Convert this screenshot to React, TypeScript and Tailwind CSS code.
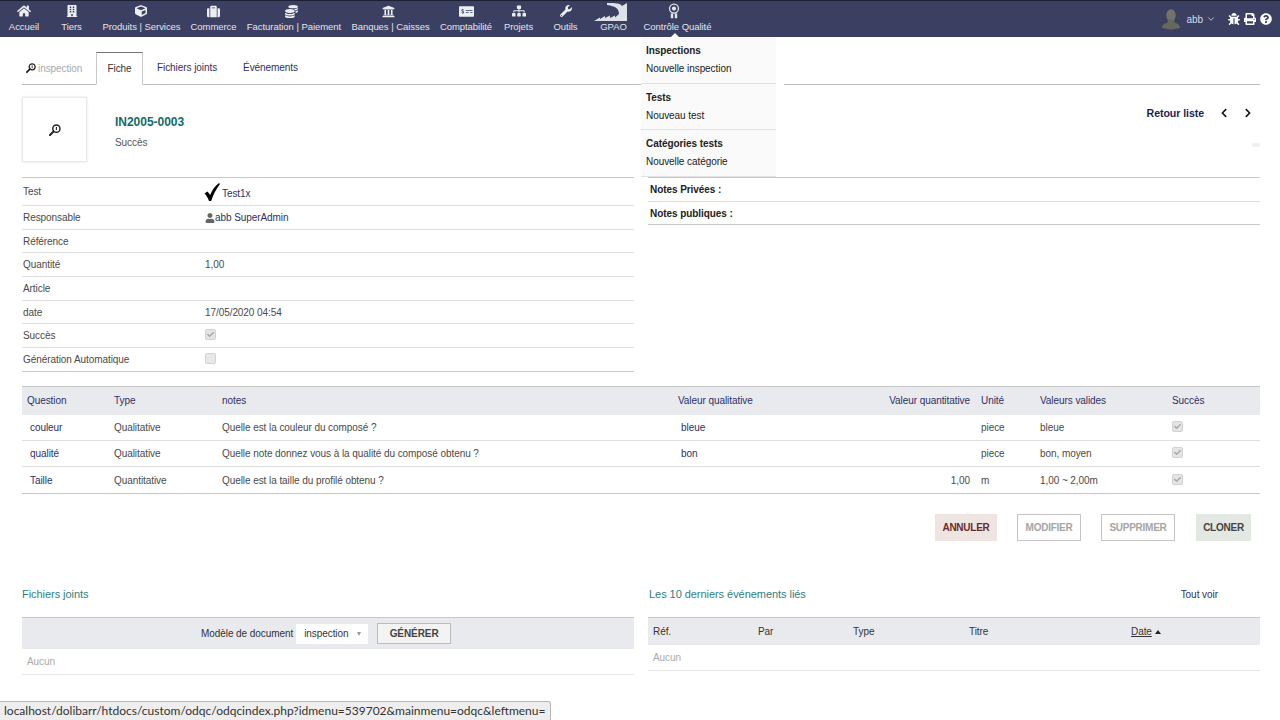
import type { ReactNode } from "react";
import {
  FaBug,
  FaBuilding,
  FaCheck,
  FaChevronLeft,
  FaChevronRight,
  FaCoins,
  FaCube,
  FaHome,
  FaMoneyCheckAlt,
  FaPrint,
  FaQuestionCircle,
  FaSitemap,
  FaSuitcase,
  FaUniversity,
  FaUser,
  FaWrench,
} from "react-icons/fa";
import { ChevronDown } from "lucide-react";

const Factory = () => (
  <svg viewBox="0 0 34 19" className="w-[34px] h-[19px] mr-[5px] mt-[1px] fill-[#dfe1e8]">
    <path d="M0 19 L6 15.5 V17 L11 14 V16 L16 13.5 V16 L21 13.5 V15.5 L25 12 C25 7 22 4 13 3 L13 1 C22 1 26 1 28 4 L33 1 V19 Z" />
  </svg>
);

const Medal = () => (
  <svg viewBox="0 0 14 20" className="w-[12px] h-[16px] mr-[7px]">
    <circle cx="7" cy="7" r="5.6" fill="none" stroke="#e3e5ea" strokeWidth="1.6" />
    <circle cx="7" cy="7" r="2.6" fill="#e3e5ea" />
    <path d="M3 13 h3 v6 h-3 z M8 13 h3 v6 h-3 z" fill="#e3e5ea" />
  </svg>
);

const Loupe = ({ size = 11 }: { size?: number }) => (
  <svg viewBox="0 0 14 14" width={size} height={size}>
    <circle cx="8.6" cy="5.4" r="4.2" fill="none" stroke="#222" strokeWidth="1.7" />
    <path d="M5.4 8.6 L1.2 12.8" stroke="#222" strokeWidth="2.4" strokeLinecap="round" />
    <path d="M8.6 3.4 v3.6" stroke="#222" strokeWidth="1.3" />
  </svg>
);

const BigCheck = () => (
  <svg viewBox="0 0 16 18" className="w-[16px] h-[18px] fill-black">
    <path d="M0.5 10.5 L3.5 8.5 L6.2 12 C8 7 11 3 15 0 L16 1 C12 6 9 12 7.2 18 L5 18 C4 15 2.5 12.5 0.5 10.5 Z" />
  </svg>
);

const Avatar = () => (
  <svg viewBox="0 0 24 26" className="w-[20px] h-[23px]">
    <ellipse cx="12" cy="8" rx="5.6" ry="7.4" fill="#727468" />
    <path d="M8.5 13 h7 l1 4 c4 1 6 3 6.5 6 q-11 4 -22 0 c.5 -3 2.5 -5 6.5 -6 z" fill="#66685e" />
  </svg>
);

const Tick = () => (
  <span className="w-[11px] h-[11px] rounded-[2px] bg-[#e4e4e4] border border-[#d2d2d2] flex items-center justify-center">
    <FaCheck className="text-[7px] text-[#a8a8a8]" />
  </span>
);

const Box = () => (
  <span className="block w-[11px] h-[11px] rounded-[2px] bg-[#e8e8e8] border border-[#d2d2d2]" />
);

const menu: { label: string; w: string; icon: ReactNode }[] = [
  { label: "Accueil", w: "w-[48px]", icon: <FaHome className="text-[14px]" /> },
  { label: "Tiers", w: "w-[47px]", icon: <FaBuilding className="text-[12px]" /> },
  { label: "Produits | Services", w: "w-[93px]", icon: <FaCube className="text-[12px] mr-[2px]" /> },
  { label: "Commerce", w: "w-[51px]", icon: <FaSuitcase className="text-[13px]" /> },
  { label: "Facturation | Paiement", w: "w-[110px]", icon: <FaCoins className="text-[13px] mr-[5px]" /> },
  { label: "Banques | Caisses", w: "w-[83px]", icon: <FaUniversity className="text-[13px] mr-[5px]" /> },
  { label: "Comptabilité", w: "w-[68px]", icon: <FaMoneyCheckAlt className="text-[15px]" /> },
  { label: "Projets", w: "w-[37px]", icon: <FaSitemap className="text-[14px]" /> },
  { label: "Outils", w: "w-[57px]", icon: <FaWrench className="text-[12px]" /> },
  { label: "GPAO", w: "w-[39px]", icon: <Factory /> },
  { label: "Contrôle Qualité", w: "w-[89px]", icon: <Medal /> },
];

const fields: { label: string; h: string; value?: ReactNode }[] = [
  {
    label: "Test",
    h: "h-[28px]",
    value: (
      <span className="flex items-end gap-[2px] text-[#2d3067] -ml-[1px]">
        <BigCheck />
        Test1x
      </span>
    ),
  },
  {
    label: "Responsable",
    h: "h-[24px]",
    value: (
      <span className="flex items-center text-[#2d3067]">
        <FaUser className="text-[10px] text-[#666]" />
        abb SuperAdmin
      </span>
    ),
  },
  { label: "Référence", h: "h-[23px]" },
  { label: "Quantité", h: "h-[24px]", value: "1,00" },
  { label: "Article", h: "h-[24px]" },
  { label: "date", h: "h-[23px]", value: "17/05/2020 04:54" },
  { label: "Succès", h: "h-[24px]", value: <span className="-mt-[3px]"><Tick /></span> },
  { label: "Génération Automatique", h: "h-[24px]", value: <span className="-mt-[3px]"><Box /></span> },
];

const rows = [
  { q: "couleur", t: "Qualitative", n: "Quelle est la couleur du composé ?", v: "bleue", qt: "", u: "piece", vv: "bleue", h: "h-[26px]" },
  { q: "qualité", t: "Qualitative", n: "Quelle note donnez vous à la qualité du composé obtenu ?", v: "bon", qt: "", u: "piece", vv: "bon, moyen", h: "h-[26px]" },
  { q: "Taille", t: "Quantitative", n: "Quelle est la taille du profilé obtenu ?", v: "", qt: "1,00", u: "m", vv: "1,00 ~ 2,00m", h: "h-[27px] pt-[1px]" },
];

const cols = "grid grid-cols-[87px_108px_456px_200px_102px_60px_132px_1fr] items-center";

const Dropdown = () => (
  <div className="absolute left-[641px] top-[37px] w-[135px] h-[140px] bg-[#fafafa] shadow-[8px_0_0_#fff] text-[#222]">
    {[
      { h: "Inspections", a: "Nouvelle inspection" },
      { h: "Tests", a: "Nouveau test" },
      { h: "Catégories tests", a: "Nouvelle catégorie" },
    ].map((s) => (
      <div key={s.h} className="pl-[5px] h-[46.5px] border-b border-[#e2e2e2] pt-[8px] flex flex-col gap-[5px]">
        <span className="font-bold leading-[12px]">{s.h}</span>
        <span className="leading-[13px]">{s.a}</span>
      </div>
    ))}
  </div>
);

export default function App() {
  return (
    <div className="relative w-[1280px] h-[720px] overflow-hidden bg-white font-['Liberation_Sans',sans-serif] text-[10px] tracking-[-0.07px] text-[#4a4a4a]">
      {/* top bar */}
      <nav className="h-[37px] bg-[#3b4062] border-t border-[#1d1f33] flex text-[#e3e4ea] text-[9.5px] tracking-[-0.05px]">
        {menu.map((m) => (
          <div key={m.label} className={`${m.w} shrink-0 flex flex-col items-center justify-end pb-[5px] relative`}>
            <div className="h-[21px] flex items-center justify-center text-[#eceef2]">{m.icon}</div>
            <span className="leading-[11px] whitespace-nowrap">{m.label}</span>
            {m.label === "Contrôle Qualité" && (
              <span className="absolute bottom-0 left-1/2 -ml-[7px] border-x-[4px] border-x-transparent border-b-[4px] border-b-white" />
            )}
          </div>
        ))}
        <div className="ml-auto flex items-center pr-[8px] text-[#d8dae2]">
          <Avatar />
          <span className="ml-[5px] text-[10px]">abb</span>
          <ChevronDown className="w-[10px] h-[10px] ml-[3px]" />
          <FaBug className="text-[12px] text-white ml-[12px]" />
          <FaPrint className="text-[12px] text-white ml-[4px]" />
          <FaQuestionCircle className="text-[12px] text-white ml-[4px]" />
        </div>
      </nav>

      <main className="pl-[22px] pr-[20px]">
        {/* tabs */}
        <div className="mt-[15px] h-[33px] border-b border-[#bdbdbd] flex items-end">
          <div className="w-[74px] h-[32px] flex items-center pl-[4px] gap-[2px] text-[#aaa]">
            <Loupe size={10} />
            inspection
          </div>
          <div className="w-[47px] h-[33px] -mb-px border border-[#c8c8c8] border-t-[#777] border-b-white flex items-center justify-center pb-[1px] text-[#333]">
            Fiche
          </div>
          <div className="h-[32px] flex items-center ml-[14px] pb-[1px] text-[#2d3067]">Fichiers joints</div>
          <div className="h-[32px] flex items-center ml-[26px] pb-[1px] text-[#2d3067]">Événements</div>
        </div>

        {/* banner */}
        <div className="relative mt-[12px] h-[65px] flex">
          <div className="w-[65px] h-[65px] border border-[#eaeaea] shadow-[0_0_2px_#ddd] flex items-center justify-center">
            <Loupe size={12} />
          </div>
          <div className="ml-[28px] flex flex-col">
            <span className="mt-[18px] text-[12px] tracking-[-0.02px] font-bold text-[#0f6b6b] leading-[14px]">IN2005-0003</span>
            <span className="mt-[7px] text-[#555] leading-[13px]">Succès</span>
          </div>
          <div className="ml-auto mr-[7px] mt-[9px] h-[14px] flex items-center text-[#1c1f52]">
            <span className="font-bold text-[10.6px] pt-[1px]">Retour liste</span>
            <FaChevronLeft className="text-[10px] text-[#111] ml-[15px]" />
            <FaChevronRight className="text-[10px] text-[#111] ml-[14px]" />
          </div>
          <span className="absolute right-0 top-[46px] w-[8px] h-[4px] rounded-full bg-[#eeeeee]" />
        </div>

        {/* fields */}
        <div className="mt-[15px] flex gap-[14px]">
          <div className="w-[612px] border-t border-[#c8c8c8]">
            {fields.map((f) => (
              <div key={f.label} className={`${f.h} flex items-center border-b border-[#dedede] last:border-[#c8c8c8]`}>
                <span className="w-[183px] pl-[1px]">{f.label}</span>
                {f.value}
              </div>
            ))}
          </div>
          <div className="w-[612px] border-t border-[#c8c8c8] font-bold text-[#222]">
            <div className="h-[24px] flex items-center border-b border-[#dedede] pl-[2px]">Notes Privées :</div>
            <div className="h-[23px] flex items-center border-b border-[#c8c8c8] pl-[2px] pt-[1px]">Notes publiques :</div>
          </div>
        </div>

        {/* questions */}
        <div className="mt-[14px]">
          <div className={`${cols} h-[29px] pb-[1px] bg-[#e9eaee] border-t border-[#c8c8c8] text-[#2d3067]`}>
            <span className="pl-[5px]">Question</span>
            <span className="pl-[5px]">Type</span>
            <span className="pl-[5px]">notes</span>
            <span className="pl-[5px]">Valeur qualitative</span>
            <span className="text-right pr-[5px] whitespace-nowrap">Valeur quantitative</span>
            <span className="pl-[6px]">Unité</span>
            <span className="pl-[5px]">Valeurs valides</span>
            <span className="pl-[5px]">Succès</span>
          </div>
          {rows.map((r) => (
            <div key={r.q} className={`${cols} ${r.h} border-b border-[#dedede] last:border-[#c8c8c8]`}>
              <span className="pl-[8px] text-[#2d3067]">{r.q}</span>
              <span className="pl-[5px]">{r.t}</span>
              <span className="pl-[5px]">{r.n}</span>
              <span className="pl-[8px] text-[#2d3067]">{r.v}</span>
              <span className="text-right pr-[5px]">{r.qt}</span>
              <span className="pl-[6px]">{r.u}</span>
              <span className="pl-[5px]">{r.vv}</span>
              <span className="pl-[5px] -mt-[3px]">
                <Tick />
              </span>
            </div>
          ))}
        </div>

        {/* actions */}
        <div className="mt-[20px] h-[27px] flex justify-end pr-[9px] font-bold tracking-[-0.25px]">
          <button className="w-[62px] pb-[1px] bg-[#eee5e2] text-[#6b2a2a]">ANNULER</button>
          <button className="w-[64px] pb-[1px] ml-[20px] border border-[#c4c4c4] text-[#a5a5a5]">MODIFIER</button>
          <button className="w-[74px] pb-[1px] ml-[20px] border border-[#c4c4c4] text-[#a5a5a5]">SUPPRIMER</button>
          <button className="w-[55px] pb-[1px] ml-[21px] bg-[#e3e8e3] text-[#444]">CLONER</button>
        </div>

        {/* bottom */}
        <div className="mt-[47px] flex gap-[14px]">
          <div className="w-[612px]">
            <div className="h-[13px] leading-[13px] text-[#2f7f7f] text-[11px] tracking-[-0.05px]">Fichiers joints</div>
            <div className="mt-[16px] h-[32px] bg-[#e9eaee] border-t border-[#c8c8c8] flex items-center pl-[179px]">
              <span className="text-[#333]">Modèle de document</span>
              <div className="ml-[3px] w-[72px] h-[20px] bg-white flex items-center pl-[8px] text-[#333]">
                inspection
                <span className="ml-[9px] border-x-[2.5px] border-x-transparent border-t-[4px] border-t-[#999]" />
              </div>
              <button className="ml-[9px] w-[74px] h-[21px] border border-[#bbb] bg-[#f3f3f3] font-bold text-[#444]">
                GÉNÉRER
              </button>
            </div>
            <div className="h-[26px] flex items-center pl-[5px] border-b border-[#e6e6e6] text-[#aaa]">Aucun</div>
          </div>
          <div className="w-[612px]">
            <div className="h-[13px] flex justify-between items-center text-[#2f7f7f] text-[11px] tracking-[-0.05px] pl-[1px]">
              Les 10 derniers événements liés
              <span className="mr-[42px] -mt-[1px] text-[10px] text-[#2d3067]">Tout voir</span>
            </div>
            <div className="mt-[16px] h-[28px] bg-[#e9eaee] border-t border-[#c8c8c8] grid grid-cols-[110px_95px_116px_162px_1fr] items-center text-[#333]">
              <span className="pl-[5px]">Réf.</span>
              <span>Par</span>
              <span>Type</span>
              <span>Titre</span>
              <span className="flex items-center gap-[3px]">
                <span className="underline">Date</span>
                <span className="border-x-[3px] border-x-transparent border-b-[4px] border-b-[#222]" />
              </span>
            </div>
            <div className="h-[26px] flex items-center pl-[5px] border-b border-[#e6e6e6] text-[#aaa]">Aucun</div>
          </div>
        </div>
      </main>

      <Dropdown />

      {/* link preview */}
      <div className="absolute left-0 bottom-0 w-[551px] h-[19px] bg-[#eeeeee] border-t border-r border-[#b5b5b5] rounded-tr-[3px] pl-[4px] font-['Lato',sans-serif] text-[12px] tracking-normal leading-[18px] text-[#333] whitespace-nowrap">
        localhost/dolibarr/htdocs/custom/odqc/odqcindex.php?idmenu=539702&mainmenu=odqc&leftmenu=
      </div>
    </div>
  );
}
